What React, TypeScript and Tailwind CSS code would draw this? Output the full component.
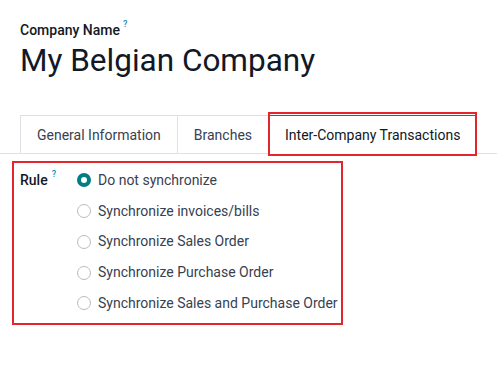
const OPSIYAT = [
  "Do not synchronize",
  "Synchronize invoices/bills",
  "Synchronize Sales Order",
  "Synchronize Purchase Order",
  "Synchronize Sales and Purchase Order",
];

function Radio({ checked }: { checked: boolean }) {
  return checked ? (
    <span className="h-[14px] w-[14px] shrink-0 rounded-full border-[4px] border-[#017e84] bg-white" />
  ) : (
    <span className="h-[14px] w-[14px] shrink-0 rounded-full border border-[#b8bcc2] bg-white" />
  );
}

export default function App() {
  return (
    <div className="h-[366px] w-[497px] overflow-hidden whitespace-nowrap bg-white font-['Roboto',sans-serif] text-[#374151]">
      <div className="px-5 pt-5">
        <div className="flex h-5 items-center text-[14px] font-medium text-[#111827]">
          Company Name
          <sup className="ml-[3px] -mt-[4px] text-[9px] text-[#0d8bc4]">?</sup>
        </div>
        <h1 className="h-[41px] text-[31.5px] leading-[41px] text-[#111827]">My Belgian Company</h1>
      </div>

      <div className="mt-[34px] flex h-[39px] border-b border-[#dee2e6] pl-5">
        <div className="flex h-[39px] items-center border border-b-0 border-[#dee2e6] px-[16px] text-[14px]">
          General Information
        </div>
        <div className="flex h-[39px] items-center border-r border-t border-[#dee2e6] px-[16px] text-[14px]">
          Branches
        </div>
        <div className="relative -mb-px flex h-[40px] items-center border-r border-t border-[#dee2e6] border-t-[#714b67] bg-white px-[16px] text-[14px] text-[#111827]">
          Inter-Company Transactions
          <span className="absolute -left-px -top-[4px] bottom-[-1px] right-[-1px] border-2 border-[#e3262c]" />
        </div>
      </div>

      <div className="ml-3 mt-[7px] h-[164px] w-[331px] border-2 border-[#e3262c] pl-[6px] pt-[2px]">
        <div className="flex">
          <div className="flex h-[31px] w-[57px] items-center text-[14px] font-medium text-[#111827]">
            Rule
            <sup className="ml-[4px] -mt-[4px] text-[9px] text-[#0d8bc4]">?</sup>
          </div>
          <div className="flex flex-col">
            {OPSIYAT.map((o, i) => (
              <label key={o} className="flex h-[30.75px] items-center gap-[7px] text-[14px]">
                <Radio checked={i === 0} />
                {o}
              </label>
            ))}
          </div>
        </div>
      </div>
    </div>
  );
}
